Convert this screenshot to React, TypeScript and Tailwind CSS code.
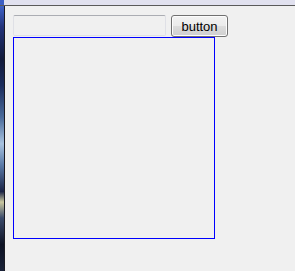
export default function App() {
  return (
    <div className="w-[295px] h-[271px] bg-[#f0f0f0] flex flex-col overflow-hidden font-['Liberation_Sans',Arial,sans-serif]">
      {/* title strip */}
      <div className="h-[6px] shrink-0 bg-[#e1e1ef] border-b border-[#5a5a5a] flex">
        <div className="w-[4px] bg-[#3d5fc4]" />
      </div>

      <div className="flex flex-1">
        {/* wallpaper peeking through at the left edge */}
        <div className="w-[5px] shrink-0 border-r border-[#1a1a22] bg-[linear-gradient(to_bottom,#3f62c8_0%,#23337a_8%,#121a3a_20%,#1b2c5c_30%,#4a6a9a_42%,#a9c3e0_52%,#5a7aa8_60%,#1a2346_70%,#c9c7a0_74%,#3a4a6a_80%,#0d1224_90%,#1a2238_100%)]" />

        <div className="pl-[8px] pt-[9px] flex flex-col">
          <div className="flex items-start gap-[5px]">
            <input
              type="text"
              className="w-[153px] h-[21px] bg-[#f0f0f0] border border-[#dfe0e6] border-t-[#abadb3] rounded-[2px] outline-none px-1 text-[13px]"
            />
            <button className="w-[57px] h-[22px] rounded-[3px] border border-[#707070] bg-[linear-gradient(to_bottom,#f2f2f2_0%,#ebebeb_50%,#dddddd_50%,#cfcfcf_100%)] text-[13px] leading-none text-black shadow-[inset_0_0_0_1px_#fcfcfc]">
              button
            </button>
          </div>
          <div className="w-[202px] h-[202px] border border-[#0000ff]" />
        </div>
      </div>
    </div>
  );
}
